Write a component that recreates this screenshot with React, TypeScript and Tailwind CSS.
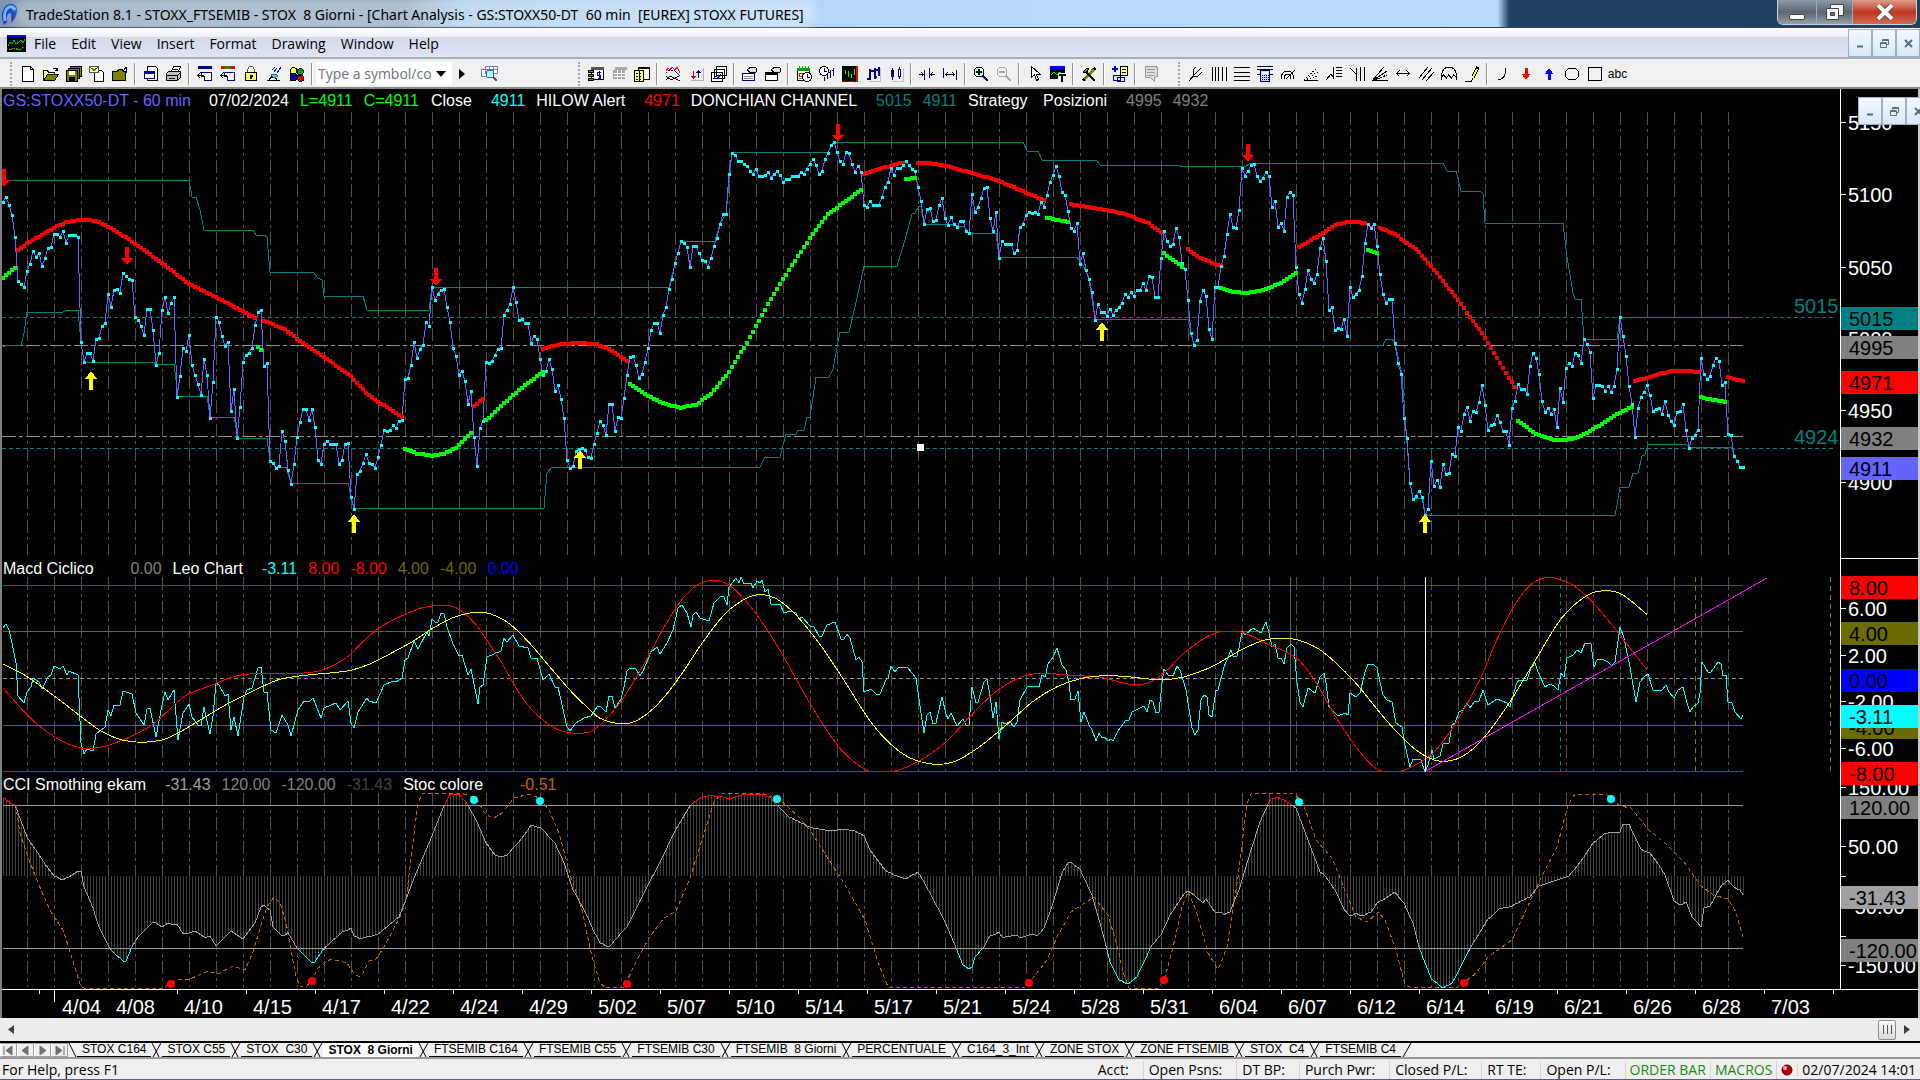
import type { ReactNode } from "react";

type Point = [number, number];

const FIRST_BAR = 3;
const BAR_STEP = 3;

// points are noted as "x,y x,y" on a finer raster, kx units per pixel across and 3 down
function seg(x0: number, kx: number, y0: number, raw: string): Point[] {
  return raw.trim().split(/\s+/).map((p) => {
    const [x, y] = p.split(",").map(Number);
    return [x / kx + x0, y / 3 + y0] as Point;
  });
}

const left = (raw: string) => seg(0, 2.45, 100, raw);
const mid = (raw: string) => seg(560, 2.45, 100, raw);
const right = (raw: string) => seg(1180, 2.119, 100, raw);
const lowLeft = (raw: string) => seg(0, 2.45, 550, raw);
const lowMid = (raw: string) => seg(600, 2.45, 550, raw);
const lowRight = (raw: string) => seg(1220, 2.24, 550, raw);

// one value for every bar between the first and the last point
function toBars(points: Point[]): Point[] {
  const snapped = points.map(([x, y]) => [Math.round((x - FIRST_BAR) / BAR_STEP), y] as Point);
  const out: Point[] = [];
  for (let i = 0; i < snapped.length - 1; i++) {
    const [a, ya] = snapped[i];
    const [b, yb] = snapped[i + 1];
    for (let k = a; k < b; k++) {
      out.push([FIRST_BAR + k * BAR_STEP, ya + ((yb - ya) * (k - a)) / (b - a)]);
    }
  }
  const last = snapped[snapped.length - 1];
  out.push([FIRST_BAR + last[0] * BAR_STEP, last[1]]);
  return out;
}

const line = (points: Point[]) => points.map(([x, y]) => `${Math.round(x)},${Math.round(y)}`).join(" ");

// rounded curve through the points
function smooth(points: Point[]) {
  let d = `M${points[0][0].toFixed(1)} ${points[0][1].toFixed(1)}`;
  for (let i = 0; i < points.length - 1; i++) {
    const p0 = points[Math.max(0, i - 1)];
    const p1 = points[i];
    const p2 = points[i + 1];
    const p3 = points[Math.min(points.length - 1, i + 2)];
    const t = (p2[0] - p1[0]) / 3;
    const s1 = (p2[1] - p0[1]) / (p2[0] - p0[0] || 1);
    const s2 = (p3[1] - p1[1]) / (p3[0] - p1[0] || 1);
    d += `C${(p1[0] + t).toFixed(1)} ${(p1[1] + s1 * t).toFixed(1)} ${(p2[0] - t).toFixed(1)} ${(p2[1] - s2 * t).toFixed(1)} ${p2[0].toFixed(1)} ${p2[1].toFixed(1)}`;
  }
  return d;
}

// a square block on every bar, drawn with a stroke of the same size
const marks = (points: Point[], size: number) =>
  points.map(([x, y]) => `M${x - Math.floor(size / 2)} ${Math.round(y) + (size % 2 ? 0.5 : 0)}h${size}`).join("");

const price = toBars([
  ...left(`8,306 15,291 22,315 30,346 38,411 45,543 52,551 60,561 67,513 74,492 82,454 89,470 96,459 103,498 111,474 118,443 125,441 133,402 140,401 148,412 155,392 163,430 170,405 186,405 192,412 199,726 207,786 214,759 221,759 228,783 236,716 243,714 251,677 258,669 265,581 273,621 280,569 288,567 295,579 302,519 310,527 317,537 324,540 332,651 339,659 346,678 353,706 361,628 368,628 376,689 383,795 390,759 397,630 405,591 412,638 420,608 427,591 435,890 442,828 449,743 457,753 464,705 471,795 479,825 486,852 493,884 501,776 508,825 515,955 523,846 530,651 537,665 545,708 552,739 559,726 567,933 574,866 582,1014 589,921 597,786 604,765 611,760 618,743 626,675 633,635 640,630 648,798 655,790 663,1082 670,1088 677,1104 684,1098 692,992 699,1022 706,1110 714,1152 721,1092 729,1011 736,966 744,927 751,927 758,960 766,927 773,981 780,1080 787,1092 795,1032 802,1023 809,1032 824,1032 832,1092 839,1080 847,1031 853,1028 861,1190 868,1226 876,1122 883,1113 890,1089 898,1061 905,1089 912,1092 920,1104 927,1070 934,1035 942,990 949,992 956,990 964,974 971,984 978,962 986,960 993,836 1000,834 1008,795 1015,726 1023,774 1030,747 1037,735 1045,665 1052,678 1059,561 1067,600 1074,582 1081,570 1089,567 1096,621 1103,665 1111,744 1118,768 1125,825 1133,813 1140,843 1147,911 1155,873 1162,1011 1170,1098 1177,984 1184,963 1192,786 1199,788 1206,783 1214,765 1221,747 1228,744 1236,645 1243,630 1250,612 1258,561 1265,606 1272,660 1280,658 1287,668 1294,668 1302,729 1309,708 1316,716 1324,777 1331,825 1338,812 1346,777 1353,807 1360,873 1368,855 1375,897 1383,954 1390,1080 1397,1104 1405,1098 1412,1052 1427,1044 1434,1050 1441,1071 1449,1074 1456,1032 1463,999 1471,962 1478,974 1485,1005 1493,911 1500,911 1508,993 1515,951 1522,954 1530,894 1537,825 1545,770 1552,768 1559,795 1566,834`),
  ...mid(`202,822 209,786 216,744 223,690 231,668 238,668 246,699 253,645 260,621 268,567 275,537 282,489 290,458 297,422 304,429 312,440 319,500 326,438 334,438 341,459 348,480 356,483 363,500 371,474 378,438 385,414 393,372 400,342 407,342 415,222 422,158 429,165 437,183 444,183 451,191 459,198 466,213 474,222 481,207 488,228 503,225 510,216 517,234 525,222 532,213 540,225 547,245 554,237 561,237 569,228 583,228 591,216 598,222 606,207 613,192 620,177 628,195 635,222 642,213 650,177 657,159 664,135 672,126 680,156 687,183 694,192 701,156 709,158 716,192 723,216 731,198 738,216 745,314 753,321 760,303 767,315 782,314 789,291 796,262 804,246 811,204 819,225 826,204 833,204 841,195 848,183 855,195 863,207 870,213 878,261 885,303 892,372 900,327 907,324 914,363 922,360 929,315 936,294 944,354 951,375 958,351 966,372 973,380 980,363 988,363 995,393 1002,399 1010,282 1017,336 1025,321 1032,294 1039,263 1047,261 1054,354 1061,393 1069,336 1076,474 1083,423 1091,432 1106,432 1113,459 1120,450 1128,381 1135,372 1142,345 1150,336 1157,340 1164,336 1172,341 1179,306 1186,320 1194,284 1201,246 1208,225 1216,198 1223,228 1230,275 1238,285 1245,332 1253,384 1260,393 1267,369 1275,492 1282,459 1289,509 1297,537 1304,576 1311,660 1318,611 1326,636 1334,636 1341,647 1348,627 1356,645 1363,630 1370,621 1378,608 1385,581 1392,591 1399,575 1407,588 1414,570 1421,569 1429,548 1437,570 1444,527 1451,531 1458,591 1466,591 1473,474 1480,393 1488,422 1495,438 1503,432 1510,383 1517,410 1525,490 1532,507 1539,600 1547,699 1554,735 1562,720`),
  ...right(`43,604 50,569 56,587 62,687 68,717 75,561 81,561 88,498 94,468 100,402 107,342 113,380 119,384 126,329 132,203 138,228 145,212 151,194 157,192 164,228 170,243 176,234 183,215 189,228 196,321 202,302 208,380 215,368 221,393 227,291 234,275 240,285 247,500 253,582 259,608 266,567 272,509 278,537 285,549 291,521 298,444 304,413 310,483 317,629 323,621 329,690 336,684 342,686 348,657 355,708 361,561 367,590 374,581 380,570 386,528 393,429 399,372 405,384 412,372 418,438 425,521 431,582 437,609 443,597 450,597 456,729 463,789 469,822 475,954 482,1014 488,1148 494,1196 500,1188 507,1172 513,1190 520,1246 526,1226 532,1083 539,1158 545,1140 551,1161 558,1091 564,1121 570,1119 577,1062 583,1068 590,980 596,993 602,942 609,920 615,963 621,932 628,935 634,905 641,855 647,915 654,990 660,975 666,972 672,944 679,966 685,992 691,993 698,1035 704,924 710,903 717,852 723,866 729,867 736,882 742,797 748,758 755,774 761,822 768,903 774,936 780,924 787,941 793,927 799,980 806,863 812,906 819,804 825,789 831,797 838,758 844,765 850,789 857,717 863,732 869,756 876,894 882,854 889,854 895,858 901,873 907,857 914,876 920,857 926,807 933,650 939,708 946,768 952,857 958,912 965,1012 971,924 978,891 984,875 990,854 997,884 1003,932 1009,927 1016,924 1022,942 1028,903 1035,944 1041,963 1048,975 1054,936 1060,932 1067,911 1073,990 1079,1045 1086,1014 1092,1005 1098,990 1105,773 1111,822 1118,837 1124,828 1130,795 1136,773 1143,782 1149,855 1155,846 1162,1002 1168,1005 1175,1067 1181,1082 1187,1101 1194,1101`),
]);

const donchianHigh = [
  ...left(`8,241 464,241 471,290 479,290 490,330 501,391 619,391 626,404 648,404 655,412 662,517 766,517 780,533 788,540 795,589 890,589 898,629 1052,629 1059,560 1371,560`),
  ...mid(`0,560 268,560 297,422 380,422 393,372 407,342 422,157 657,157 672,125 1135,125 1143,154 1171,154 1180,181 1312,181 1322,196 1518,196`),
  ...right(`0,197 140,197 150,190 557,190 565,214 585,214 596,274 635,274 641,283 647,370 812,370 820,470 832,580 838,596 850,596 857,716 926,716 933,650 1193,650`),
];

const donchianLow = [
  ...left(`8,742 15,734 52,734 60,700 67,637 155,637 163,629 192,629 199,726 207,785 376,785 383,793 427,793 435,889 508,889 515,952 574,952 582,1013 655,1013 662,1082 677,1102 700,1102 714,1150 853,1150 868,1225 1332,1225 1339,1120 1353,1102 1371,1102`),
  ...mid(`0,1102 490,1102 502,1072 540,1072 553,1003 577,1003 584,991 598,991 606,952 613,950 628,832 658,832 668,806 687,697 708,697 722,620 745,499 826,499 845,420 863,342 870,340 880,318 885,320 892,371 950,371 990,380 1002,398 1069,398 1076,472 1267,472 1282,495 1297,537 1311,658 1518,658`),
  ...right(`0,658 18,658 30,734 431,734 437,718 450,716 456,729 470,824 488,1148 494,1195 515,1195 520,1246 921,1246 926,1215 933,1160 951,1160 960,1120 970,1119 978,1068 985,1065 991,1033 1073,1033 1079,1042 1168,1042 1175,1067`),
];

const redTrend = [
  left("45,450 67,430 100,405 133,383 165,367 200,359 235,363 265,380 310,412 340,437 398,489 465,552 530,591 595,634 626,654"),
  left("648,662 695,688 730,716 795,771 861,829 900,878 928,906 960,932 986,951"),
  left("1162,919 1184,896"),
  left("1331,747 1365,734 1415,729 1460,733 1500,752 1539,783"),
  mid("745,222 780,207 841,188"),
  mid("878,188 905,189 945,197 1010,219 1075,243 1135,274 1186,300"),
  mid("1253,312 1320,326 1385,341 1440,370 1473,396"),
  right("18,448 45,475 84,497"),
  right("253,441 300,400 330,375 355,366 392,368"),
  right("424,383 455,403 500,447 545,520 590,600 640,700 685,805 711,860"),
  right("964,843 1000,828 1035,815 1065,812 1100,816"),
  right("1162,831 1194,844"),
];

const greenTrend = [
  left("8,534 38,503"),
  left("633,742 640,750"),
  left("993,1046 1025,1061 1060,1067 1090,1061 1118,1044 1157,1000"),
  left("1192,961 1258,885 1290,848 1328,817"),
  mid("172,852 217,887 250,910 297,923 330,914 370,882 415,816 460,728 510,612 560,509 614,414 660,342 690,310 738,269"),
  mid("848,237 870,234"),
  mid("1194,353 1220,361 1247,366"),
  mid("1480,460 1525,500"),
  right("88,565 115,576 145,579 175,571 215,548 247,518"),
  right("399,450 418,460"),
  right("717,962 755,1002 790,1020 820,1021 850,1008 900,966 940,932 958,922"),
  right("1105,892 1155,906"),
];

const leo = [
  ...lowLeft(`8,233 15,223 22,240 30,280 38,340 45,437 60,460 67,427 75,410 82,383 89,390 96,395 103,417 118,380 125,375 133,347 148,358 155,347 163,375 170,362 192,375 199,580 207,612 214,597 228,603 236,552 258,532 265,480 273,497 280,465 295,465 302,423 324,433 332,488 353,524 361,478 368,475 383,562 397,465 405,427 412,450 427,420 435,570 449,490 464,463 471,500 486,525 493,527 501,470 515,553 523,497 530,400 537,405 552,437 559,432 567,540 574,500 582,558 597,440 604,420 618,415 633,355 640,352 648,425 655,425 663,540 677,550 692,495 706,525 714,557 729,480 744,453 758,455 766,443 787,505 795,473 824,460 832,480 853,453 861,520 868,533 876,485 898,443 905,453 920,458 942,405 964,393 971,397 986,383 993,330 1000,325 1015,272 1023,297 1045,245 1052,258 1059,208 1067,220 1074,215 1081,190 1089,192 1096,230 1111,283 1125,317 1133,315 1147,375 1155,357 1170,462 1177,412 1184,405 1192,320 1228,302 1236,263 1243,275 1258,255 1272,288 1294,293 1302,325 1316,323 1331,390 1346,372 1360,412 1368,412 1390,530 1397,542 1412,520 1430,503 1449,497 1463,470`),
  ...lowMid(`0,468 15,487 22,437 30,437 37,475 52,447 60,410 67,362 74,355 89,357 97,377 105,362 125,305 140,290 148,313 163,280 180,240 192,175 200,166 214,190 222,232 229,195 236,187 244,205 266,213 280,160 297,138 303,140 310,165 317,110 332,85 340,100 346,82 354,103 370,98 376,113 384,92 392,98 397,90 405,127 412,118 420,162 442,163 450,190 465,183 480,190 488,207 495,200 515,228 525,230 537,257 545,258 555,225 575,216 590,267 597,268 605,252 613,265 627,330 634,320 642,335 648,425 663,418 678,436 686,432 700,390 706,383 714,347 722,365 729,353 752,350 765,370 775,383 787,490 795,548 802,495 809,485 817,522 824,520 839,440 847,493 853,508 861,488 875,528 890,508 897,525 904,525 912,410 920,460 927,455 941,395 948,387 955,437 963,505 971,455 978,568 986,515 993,522 1005,517 1015,530 1022,515 1030,450 1045,412 1052,408 1075,410 1082,375 1090,380 1097,343 1110,320 1119,293 1133,345 1141,360 1148,400 1155,450 1163,447 1170,422 1178,515 1185,485 1198,525 1205,540 1214,573 1222,550 1229,565 1237,560 1244,573 1252,567 1258,572 1270,543 1288,510 1295,510 1303,487 1332,468 1340,485 1347,450 1354,455 1362,490 1369,485 1376,400 1383,357 1391,375 1405,377 1413,347 1420,360 1435,420 1450,535 1457,555 1464,540 1472,450 1480,435 1486,442 1493,495 1500,500 1508,420 1515,420 1530,350 1545,300 1552,317`),
  ...lowRight(`37,318 43,295 50,243 57,255 75,235 91,248 104,215 110,250 117,290 124,282 131,325 137,325 144,342 151,295 158,282 165,290 172,400 179,455 185,470 198,413 213,430 225,380 232,370 238,400 245,470 265,497 280,490 286,495 292,430 305,442 313,430 325,365 332,343 345,345 352,355 365,435 373,450 386,455 395,520 407,530 412,570 426,650 433,628 450,630 460,665 467,645 474,600 480,628 493,617 500,583 513,580 520,525 527,520 535,487 545,480 553,460 560,475 568,457 580,453 588,420 600,465 620,447 642,460 650,470 662,405 670,390 688,390 696,355 705,340 713,365 728,410 740,403 748,408 756,420 763,370 770,380 777,325 790,315 800,300 808,310 817,280 830,283 837,352 845,330 855,327 870,337 878,347 885,335 897,230 905,265 912,310 918,350 931,455 940,395 950,380 958,372 970,420 990,420 998,405 1005,425 1017,445 1025,420 1037,412 1045,460 1052,487 1060,470 1070,460 1075,430 1079,335 1092,365 1100,365 1115,335 1122,342 1127,378 1133,375 1139,455 1147,460 1153,487 1167,507 1172,495`),
];

const macdRed = [
  ...lowLeft("8,415 67,495 100,532 133,560 165,581 199,594 240,593 275,582 332,553 380,518 435,455 465,430 515,407 560,385 600,373 700,369 735,370 790,360 850,322 885,280 925,237 970,206 1030,175 1080,166 1105,168 1130,182 1165,222 1195,275 1230,340 1270,425 1300,475 1330,510 1365,538 1400,549 1440,547"),
  ...lowMid("0,525 45,465 85,390 120,315 160,225 200,150 235,108 270,91 300,95 330,118 370,172 410,240 450,320 500,430 550,530 590,598 630,643 660,663 700,666 740,657 800,620 850,573 910,495 960,435 1000,400 1045,376 1090,370 1160,377 1220,380 1260,392 1300,403 1345,398 1390,360 1430,310 1480,265 1517,245"),
  ...lowRight("0,244 50,247 100,278 172,325 213,393 265,513 325,625 360,662 405,663 440,643 480,605 530,515 580,395 620,270 660,165 697,103 725,84 750,84 790,105 830,150 875,220 920,297 957,360"),
];

const macdYellow = [
  ...lowLeft("8,343 60,375 133,438 199,500 250,545 300,570 350,577 400,569 435,550 500,503 560,460 620,423 680,390 740,377 850,363 900,345 950,315 1010,275 1060,235 1110,203 1160,187 1200,191 1250,223 1300,283 1350,355 1400,425 1450,485"),
  ...lowMid("0,505 40,520 80,517 120,487 160,437 200,372 250,280 300,200 340,158 385,134 430,145 480,195 540,285 600,395 660,510 710,580 760,624 820,643 870,634 930,590 1000,520 1060,455 1120,410 1180,385 1240,377 1300,381 1370,389 1430,381 1490,355"),
  ...lowRight("0,337 50,298 100,270 140,265 180,272 230,305 300,393 370,507 430,590 480,630 530,627 580,580 640,475 700,345 765,205 820,138 860,122 900,133 957,194"),
];

const cci = toBars([
  ...lowLeft("8,742 25,755 38,766 45,790 67,862 90,900 115,955 133,977 155,990 175,975 192,962 200,962 207,1010 225,1075 245,1130 265,1185 275,1200 300,1233 310,1232 325,1192 340,1160 360,1135 378,1115 398,1130 412,1120 435,1122 450,1152 475,1143 500,1162 515,1158 530,1187 565,1143 597,1167 625,1118 640,1072 648,1065 660,1080 672,1130 690,1158 706,1150 730,1195 765,1238 773,1235 795,1195 835,1147 860,1135 868,1158 885,1166 925,1152 942,1137 975,1100 993,1055 1015,985 1050,880 1080,790 1090,767 1105,732 1125,732 1150,765 1170,815 1190,880 1215,915 1230,922 1245,915 1280,865 1302,826 1325,832 1360,878 1385,940 1405,1020 1430,1085 1455,1145"),
  ...lowMid("0,1178 24,1191 67,1130 95,1058 120,1005 148,937 185,842 222,767 250,740 270,736 297,738 318,745 350,733 400,733 420,745 437,765 465,800 515,832 550,840 575,842 590,837 620,839 648,858 665,900 700,960 720,975 750,987 780,965 790,980 810,1030 845,1115 873,1200 890,1245 905,1257 912,1250 920,1222 940,1190 955,1158 978,1147 986,1162 1020,1155 1030,1165 1055,1153 1075,1155 1090,1135 1110,1060 1130,970 1145,938 1155,937 1175,957 1205,1035 1225,1130 1250,1235 1275,1290 1290,1303 1315,1280 1355,1185 1375,1155 1395,1095 1430,1028 1440,1022 1475,1058 1488,1047 1508,1087"),
  ...lowRight("0,1087 12,1094 25,1085 45,1020 60,930 90,815 110,757 117,743 128,742 150,755 170,775 195,870 225,965 240,980 255,1020 275,1078 292,1098 305,1090 318,1098 340,1085 355,1060 393,1027 410,1060 430,1120 445,1190 470,1285 500,1314 520,1300 545,1230 565,1180 600,1108 630,1075 655,1068 695,1040 715,1007 780,978 800,945 818,920 835,880 865,850 878,845 896,847 905,823 915,823 930,860 940,898 960,910 985,945 1000,975 1020,1052 1032,1066 1045,1055 1060,1100 1078,1130 1086,1075 1100,1067 1125,1005 1138,990 1150,1012 1162,1020 1172,1035"),
]);

const stoc = [
  ...lowLeft("8,742 38,770 50,850 70,930 100,1020 125,1085 155,1140 175,1215 199,1310 207,1315 400,1315 420,1300 440,1287 465,1288 510,1263 535,1273 570,1248 600,1260 620,1205 640,1125 655,1070 672,1040 685,1060 700,1115 725,1280 735,1308 750,1312 765,1290 780,1255 810,1228 850,1238 865,1265 880,1280 890,1270 905,1232 922,1228 940,1190 980,1100 995,1050 1010,900 1025,760 1035,732 1060,730 1130,730 1165,745 1190,795 1210,805 1230,790 1260,745 1295,732 1320,745 1345,780 1370,850 1400,980 1425,1080 1450,1220"),
  ...lowMid("0,1300 15,1315 60,1310 90,1230 120,1165 155,1108 187,1083 220,985 250,870 280,755 300,730 395,730 440,750 490,805 520,850 560,930 600,1005 650,1110 680,1235 705,1312 1040,1315 1060,1285 1095,1230 1120,1160 1155,1085 1210,1042 1245,1095 1265,1175 1285,1275 1297,1315 1370,1315 1385,1280 1405,1190 1425,1070 1440,1025 1460,1080 1490,1210 1513,1257"),
  ...lowRight("0,1245 15,1190 40,980 60,760 70,732 165,730 185,760 215,870 250,925 290,1050 305,1100 330,1115 355,1087 370,1110 395,1200 415,1305 430,1315 535,1312 575,1265 600,1220 655,1170 700,1035 725,965 755,890 780,765 795,732 865,731 895,767 920,775 960,840 1000,882 1040,935 1075,1005 1105,1035 1137,1047 1155,1085 1172,1160"),
];

const gridXs = Array.from({ length: 64 }, (_, i) => 27 * (i + 1));

function Grid({ top, bottom }: { top: number; bottom: number }) {
  return (
    <path
      d={gridXs.map((x) => `M${x + 0.5} ${top}V${bottom}`).join("")}
      stroke="#505050"
      strokeDasharray="13 4 3 4"
    />
  );
}

function PricePane() {
  return (
    <svg viewBox="2 109 1838 446" preserveAspectRatio="none" className="block h-[446px] w-full" fill="none" shapeRendering="crispEdges" role="img" aria-label="Close price with Donchian channel">
      <Grid top={112} bottom={555} />
      <path d="M2 317.5H1836M2 448.5H1836" stroke="#008080" strokeDasharray="4 3" />
      <path d="M2 345.5H1743M2 436.5H1743" stroke="#909090" strokeDasharray="14 3 4 3" />
      <polyline points={line(donchianHigh)} stroke="#008080" />
      <polyline points={line(donchianLow)} stroke="#008080" />
      <polyline points={line(price)} stroke="#6464ff" />
      <path d={redTrend.map((s) => marks(toBars(s), 4)).join("")} stroke="#ff0000" strokeWidth="4" />
      <path d={greenTrend.map((s) => marks(toBars(s), 4)).join("")} stroke="#00ff00" strokeWidth="4" />
      <path d={marks(price, 3)} stroke="#00ffff" strokeWidth="3" />
      {[[4, 187], [127, 265], [436, 286], [838, 142], [1248, 162]].map(([x, y]) => (
        <path key={x} d={`M${x} ${y}l-6 -7h4v-11h4v11h4z`} fill="#ff0000" />
      ))}
      {[[91, 371], [354, 514], [580, 450], [1102, 322], [1425, 514]].map(([x, y]) => (
        <path key={x} d={`M${x} ${y}l-6 8h4v11h4v-11h4z`} fill="#ffff00" />
      ))}
      <path d="M917 444h7v7h-7z" fill="#ffffff" />
      <g fontFamily="Liberation Sans, sans-serif" fontSize="20" fill="#008080">
        <text x="1794" y="313">5015</text>
        <text x="1794" y="444">4924</text>
      </g>
    </svg>
  );
}

function MacdPane() {
  return (
    <svg viewBox="2 577 1838 195" preserveAspectRatio="none" className="block h-[195px] w-full" fill="none" shapeRendering="crispEdges" role="img" aria-label="Macd Ciclico and Leo Chart">
      <Grid top={577} bottom={772} />
      <path d="M3 631.5H1743M3 725.5H1743" stroke="#6b6b00" />
      <path d="M3 585.5H1743M3 771.5H1743" stroke="#ff0000" />
      <path d="M3 678.5H1743" stroke="#909090" strokeDasharray="4 3" />
      <path d="M1290.5 577V772" stroke="#606060" />
      <path d="M1560.5 577V772" stroke="#008080" strokeDasharray="4 4" />
      <path d="M1695.5 577V772M1830.5 577V772" stroke="#808000" strokeDasharray="5 4" />
      <polyline points={line(leo)} stroke="#00ffff" />
      <path d={smooth(macdRed)} stroke="#ff0000" />
      <path d={smooth(macdYellow)} stroke="#ffff00" />
      <path d="M1426 771L1767 578" stroke="#ff00ff" />
      <path d="M1425.5 577V772" stroke="#ffffff" />
    </svg>
  );
}

function CciPane() {
  const zero = 876;
  return (
    <svg viewBox="2 793 1838 197" preserveAspectRatio="none" className="block h-[197px] w-full" fill="none" shapeRendering="crispEdges" role="img" aria-label="CCI Smothing ekam and Stoc colore">
      <defs>
        <clipPath id="over"><rect x="0" y="780" width="1840" height="25" /></clipPath>
        <clipPath id="under"><rect x="0" y="949" width="1840" height="50" /></clipPath>
      </defs>
      <Grid top={793} bottom={987} />
      <path d={cci.map(([x, y]) => `M${x + 0.5} ${zero}V${Math.round(y)}`).join("")} stroke="#404040" />
      <path d="M3 805.5H1743M3 948.5H1743" stroke="#9a9a9a" />
      <polyline points={line(stoc)} stroke="#c86400" strokeDasharray="4 3" />
      <polyline points={line(cci)} stroke="#a0a0a0" />
      <polyline points={line(cci)} stroke="#ff0000" clipPath="url(#over)" />
      <polyline points={line(cci)} stroke="#00ffff" clipPath="url(#under)" />
      <g fill="#00ffff" shapeRendering="auto">
        {[[474, 800], [540, 801], [777, 799], [1299, 802], [1611, 799]].map(([x, y]) => <circle key={x} cx={x} cy={y} r="4" />)}
      </g>
      <g fill="#ff0000" shapeRendering="auto">
        {[[171, 984], [312, 981], [627, 984], [1029, 983], [1164, 980], [1464, 983]].map(([x, y]) => <circle key={x} cx={x} cy={y} r="4" />)}
      </g>
      <path d="M2 989.5H1840" stroke="#ffffff" strokeWidth="1" />
    </svg>
  );
}

const axisTicks: [number, string][] = [
  [122, "5150"], [194, "5100"], [267, "5050"], [338, "5000"], [410, "4950"], [482, "4900"],
  [608, "6.00"], [655, "2.00"], [701, "-2.00"], [748, "-6.00"], [774, ""],
  [787, "150.00"], [846, "50.00"], [876, ""], [906, "-50.00"], [936, ""], [965, "-150.00"],
];

const axisTags: [number, string, string][] = [
  [307, "5015", "#008080"], [336, "4995", "#808080"], [371, "4971", "#ff0000"], [427, "4932", "#808080"], [457, "4911", "#6464ff"],
  [576, "8.00", "#ff0000"], [622, "4.00", "#6b6b00"], [669, "0.00", "#0000ff"], [716, "-4.00", "#6b6b00"], [705, "-3.11", "#00ffff"], [762, "-8.00", "#ff0000"],
  [796, "120.00", "#808080"], [886, "-31.43", "#a0a0a0"], [939, "-120.00", "#808080"],
];

function ValueAxis() {
  return (
    <svg viewBox="1840 89 78 929" className="block h-[929px] w-[78px] shrink-0" shapeRendering="crispEdges" fontFamily="Liberation Sans, sans-serif" fontSize="20">
      <path d="M1840.5 89V990M1840 558.5H1918M1840 989.5H1918" stroke="#ffffff" fill="none" />
      {axisTicks.map(([y, label]) => (
        <g key={y} fill="#ffffff">
          <rect x="1841" y={y} width="5" height="1" />
          <text x="1848" y={y + 8}>{label}</text>
        </g>
      ))}
      {axisTags.map(([y, label, color]) => (
        <g key={label}>
          <rect x="1841" y={y} width="77" height="23" fill={color} />
          <text x="1849" y={y + 19} fill="#000000">{label}</text>
        </g>
      ))}
    </svg>
  );
}

const dates = ["4/10", "4/15", "4/17", "4/22", "4/24", "4/29", "5/02", "5/07", "5/10", "5/14", "5/17", "5/21", "5/24", "5/28", "5/31", "6/04", "6/07", "6/12", "6/14", "6/19", "6/21", "6/26", "6/28", "7/03"];

function TimeAxis() {
  return (
    <div className="flex h-7 text-[20px] leading-[34px] text-white">
      <span className="h-1 w-[38px] border-r border-white" />
      <span className="h-3 w-[15px] border-r border-white" />
      <span className="w-[54px] pl-[7px]">4/04</span>
      <span className="w-[68px] pl-[7px]">4/08</span>
      {dates.map((d) => (
        <span key={d} className="relative flex-1 pl-[7px] before:absolute before:left-0 before:top-0 before:h-1 before:w-px before:bg-white">{d}</span>
      ))}
      <span className="h-1 w-[7px] border-l border-white" />
    </div>
  );
}

type Study = { name: string; values: [string, string][] };

function StudyRow({ studies, className }: { studies: Study[]; className: string }) {
  return (
    <div className={`flex items-center gap-[11px] pl-px text-[16px] whitespace-pre ${className}`}>
      {studies.map((s) => (
        <div key={s.name} className="flex gap-[11px]">
          <span className={s.values.length ? "mr-2 text-white" : "text-white"}>{s.name}</span>
          {s.values.map(([v, color]) => <span key={v} className={color}>{v}</span>)}
        </div>
      ))}
    </div>
  );
}

function Ico({ children, w = 16 }: { children: ReactNode; w?: number }) {
  return <svg width={w} height="16" viewBox={`0 0 ${w} 16`} fill="none" stroke="#000" shapeRendering="crispEdges">{children}</svg>;
}

const calendar = (
  <>
    <path d="M1.500 2.500h12v12h-12z" fill="#fff" />
    <path d="M1 2h13v3h-13z" fill="#00a000" stroke="none" />
    <path d="M3.500 0v3M6.500 0v3M9.500 0v3M12.500 0v3" stroke="#00c000" />
    <path d="M3 7h3v3h-3z" stroke="#f00" />
    <path d="M3 12h4" stroke="#888" />
    <circle cx="11" cy="11" r="4.500" fill="#fff" />
    <path d="M11.500 8v3.500h2" />
  </>
);

const fileIcons: [string, ReactNode][] = [
  ["New", <Ico><path d="M2.500 .5h8l3 3v12h-11zM10.500 .5v3h3" fill="#fff" /></Ico>],
  ["Open", <Ico><path d="M.5 14.500v-10h4l1 2h6v2" fill="#ffff80" /><path d="M.5 14.500l4-6h11l-4 6z" fill="#808000" /><path d="M9.500 3.500q3-3 5 1M14.500 1.500v3h-3" /></Ico>],
  ["Save all", <Ico><path d="M4.500 .5h11v10h-11z" fill="#808000" /><path d="M2.500 2.500h11v10h-11z" fill="#808000" /><path d="M.5 4.500h11v11h-11z" fill="#808000" /><path d="M3 5h6v4h-6z" fill="#fff" stroke="none" /><path d="M3 11h6v4h-6z" fill="#000" stroke="none" /></Ico>],
  ["Send", <Ico><path d="M5.500 4.500h7l2 2v9h-9z" fill="#fff" /><path d="M.5 .5h9v6h-9z" fill="#ffff80" stroke="#555" /><path d="M.5 .5l4.500 4 4.500-4" stroke="#555" /></Ico>],
  ["Close", <Ico><path d="M.5 14.500v-9h5l1-2h4l1 2h2v9z" fill="#808000" /><path d="M14.500 7v-6M12 3.500l2.500-2.500" stroke="#000080" /></Ico>],
];

const printIcons: [string, ReactNode][] = [
  ["Print preview", <Ico><path d="M4.500 .5h8l2 2v12h-10z" fill="#fff" /><path d="M1.500 5.500h10v7h-10z" fill="#fff" stroke="#000080" /><path d="M1 5h11v3h-11z" fill="#0000a0" stroke="none" /></Ico>],
  ["Print", <Ico><path d="M5.500 5.500l2-5h7l-2 5" fill="#fff" /><path d="M.5 7.500l2-2h12v6l-3 3h-11z" fill="#c0c0c0" /><path d="M.5 9.500h11v5M11.500 9.500l3-3M7 3.500h5M3 12.500h6" /></Ico>],
];

const dataIcons: [string, ReactNode][] = [
  ["Insert symbol", <Ico><path d="M1 1.500h14" stroke="#000080" strokeWidth="3" /><path d="M4.500 6.500h10v8h-7v-4h-3z" fill="#fff" stroke="#000080" /><path d="M.5 9.500h6M3.500 6.500l-3 3 3 3" /></Ico>],
  ["Insert strategy", <Ico><path d="M1 1.500h4" stroke="#f00" strokeWidth="3" /><path d="M5 1.500h5" stroke="#00a000" strokeWidth="3" /><path d="M10 1.500h5" stroke="#f00" strokeWidth="3" /><path d="M4.500 6.500h10v8h-7v-4h-3z" fill="#fff" stroke="#000080" /><path d="M.5 9.500h6M3.500 6.500l-3 3 3 3" /></Ico>],
  ["Lock", <Ico><path d="M4.500 7.500v-4l2-3h3l2 3v4" stroke="#555" /><path d="M2.500 6.500h11v8h-11z" fill="#ffff60" /><path d="M6.500 9.500h3M8 9v4" strokeWidth="2" /></Ico>],
  ["Data link", <Ico><path d="M1 14.500h13M3 14l4-6 4 6M5 11h5" /><path d="M5 9l5-1 2 2-4 2z" fill="#80c0ff" stroke="#008080" /><path d="M8 6l3-4M11 7l4-6M6 4l3-3" stroke="#0000c0" /></Ico>],
  ["EasyLanguage", <Ico><path d="M1 4l3-3 4 2-1 4-5 1z" fill="#ffff00" /><path d="M8 4l4-2 3 3-2 4-4-1z" fill="#00a000" /><path d="M1 8l5-1 2 3-1 4-5 1z" fill="#0000c0" /><path d="M9 9l5 1 1 4-4 2-3-3z" fill="#e00000" /></Ico>],
];

const viewIcons: [string, ReactNode][][] = [
  [
    ["Time and sales", <Ico><path d="M3.500 1.500h12v12h-12z" fill="#fff" /><path d="M3 1h13v3h-13z" fill="#555" stroke="none" /><path d="M.5 4.500h5v2h-5zM.5 8.500h5v2h-5zM.5 12.500h5v2h-5z" fill="#808000" /><path d="M12.500 6h-3v3h3v3h-3M11 5v8" stroke="#0000c0" /></Ico>],
    ["Quote list", <Ico><path d="M4 1h12v3h-12zM2 4h12v9h-12z" fill="#a8a8a8" stroke="none" /><path d="M3 7h11M3 10h11M6 4v10M10 4v10" stroke="#fff" /></Ico>],
    ["Data window", <Ico><path d="M4.500 1.500h11v12h-11z" fill="#fff" /><path d="M4 1.500h12" strokeWidth="2" /><path d="M.5 4.500h9v11h-9z" fill="#ffff80" /><path d="M2 7.500h6M2 10.500h6M2 13.500h6M5.500 5v10" strokeDasharray="2 1" /></Ico>],
  ],
  [
    ["Indicator", <Ico><path d="M1 5l2-3 2 2 2-3 3 3 2-3 2 4 1 2" stroke="#f00" /><path d="M1 7l4-3 5 1 5 5" stroke="#0000c0" strokeDasharray="2 1" /><path d="M1 14l4-4 4 2 6 3M1 10l5 4 8-4" /></Ico>],
    ["Buy and sell arrows", <Ico><path d="M15.500 2v12.500h-13" stroke="#b0b0b0" /><path d="M5.500 5v7M3.500 10l2 2 2-2" stroke="#c00000" /><path d="M10.500 12v-7M8.500 7l2-2 2 2" stroke="#000080" /></Ico>],
    ["Chart windows", <Ico><path d="M5.500 .5h10v9h-10zM3.500 3.500h10v9h-10zM.5 6.500h11v9h-11z" fill="#fff" /><path d="M2 13l3-3 2 2 3-4" stroke="#0000c0" /></Ico>],
  ],
  [
    ["Format window", <Ico><path d="M.5 7.500h12v7h-12z" fill="#fff" stroke="#000080" /><path d="M5 4l4-3 5 1v4l-5 1z" fill="#ddd" /><path d="M2 10.500h9M2 12.500h9" stroke="#888" /></Ico>],
    ["Format symbol", <Ico><path d="M.5 6.500h12v8h-12z" fill="#fff" /><path d="M0 7.500h13" strokeWidth="3" /><path d="M6 4l4-3 5 1v4l-5 1z" fill="#ddd" /></Ico>],
  ],
  [
    ["Sessions", <Ico>{calendar}</Ico>],
    ["Interval", <Ico><circle cx="5" cy="5" r="4.500" fill="#fff" /><path d="M5 2v3h3" /><path d="M5 15v-4M8 13v-4M11 12v-8M14 10v-8M9.500 6h2M12.500 4h2" stroke="#000080" /></Ico>],
    ["Bars", <Ico><path d="M0 0h16v16h-16z" fill="#000" stroke="none" /><path d="M15 0v16" stroke="#f00" strokeWidth="2" /><path d="M0 15.500h13" stroke="#a00" /><path d="M3.500 4v4M6.500 5v6M9.500 8v4M12.500 3v6" stroke="#00ff00" /></Ico>],
    ["OHLC bars", <Ico><path d="M15.500 2v13.500h-12" stroke="#c0c0c0" /><path d="M4.500 3v11M2 12.500h2M9.500 2v11M5 4.500h4M10 10.500h2M13.500 1v9M11 3.500h3" stroke="#000080" strokeWidth="2" /></Ico>],
    ["Candlesticks", <Ico><path d="M15.500 2v13.500h-12" stroke="#c0c0c0" /><path d="M4.500 2v12M11.500 1v12" stroke="#000080" /><path d="M3 4h3v7h-3z" fill="#000080" stroke="none" /><path d="M10.500 3.500h2v7h-2z" fill="#fff" stroke="#000080" /></Ico>],
  ],
  [
    ["Decrease bar spacing", <Ico><path d="M5.500 4v10M10.500 2v10" stroke="#000080" /><path d="M0 8.500h4M2.500 6.500l2 2-2 2M16 8.500h-4M13.500 6.500l-2 2 2 2" /></Ico>],
    ["Increase bar spacing", <Ico><path d="M1.500 2v10M14.500 4v10" stroke="#000080" /><path d="M3 8.500h10M5.500 6.500l-2 2 2 2M10.500 6.500l2 2-2 2" /></Ico>],
  ],
  [
    ["Zoom in", <Ico><circle cx="6" cy="6" r="5" fill="#d8ffff" /><path d="M3 6h6M6 3v6" strokeWidth="2" /><path d="M10 10l5 5" stroke="#000080" strokeWidth="2" /></Ico>],
    ["Zoom out", <Ico><circle cx="6" cy="6" r="5" stroke="#a8a8a8" /><path d="M3 6h6" stroke="#a8a8a8" strokeWidth="2" /><path d="M10 10l5 5" stroke="#a8a8a8" strokeWidth="2" /></Ico>],
  ],
  [
    ["Pointer", <Ico><path d="M4.500 .5v11l3-3 2 6 2-1-2-5h4z" fill="#fff" /></Ico>],
    ["Text tool", <Ico><path d="M0 1h15v12h-15z" fill="#000" stroke="none" /><path d="M0 1.500h15" stroke="#00f" strokeWidth="3" /><path d="M1 9l3-3 3 3 4-3" stroke="#0f0" /><path d="M8 7h8v9h-8z" fill="#efefef" stroke="none" /><path d="M8.500 8.500h7M12 8v8" strokeWidth="2" /></Ico>],
  ],
  [["Customize", <Ico><path d="M3 14l10-11" stroke="#808000" strokeWidth="3" /><path d="M2 6l4-4 2 1-3 4z" fill="#808000" /><path d="M6 7l8 8M13 2l2 2M2 13l2 2" strokeWidth="2" /></Ico>]],
  [["Add window", <Ico><path d="M0 3h6M3 0v6" stroke="#0000e0" strokeWidth="2" /><path d="M8.500 .5h7v9h-7z" fill="#ffff80" /><path d="M10 3.500h4M10 6.500h4" /><path d="M1.500 9.500h7v5h-7zM5.500 11.500h7v4h-7z" fill="#d8e4f8" stroke="#000080" /></Ico>]],
  [["Notes", <Ico><path d="M2.500 .5h11l1 2v8l-3 1v4l-4-4h-5z" fill="#ddd" stroke="#999" /><path d="M4 3.500h8M4 6.500h8M4 9.500h8" stroke="#999" /></Ico>]],
];

const drawIcons: [string, ReactNode][] = [
  ["Pitchfork", <Ico><path d="M1 15l6-7M7 8l6-6M5 4v6h5M5 4l3-3M10 10l4-4" /></Ico>],
  ["Vertical lines", <Ico><path d="M1.500 1v14M4.500 1v14M7.500 1v14M11.500 1v14M15.500 1v14" /></Ico>],
  ["Horizontal lines", <Ico><path d="M0 1.500h16M0 6.500h16M0 10.500h16M0 14.500h16" /></Ico>],
  ["Calculator", <Ico><path d="M0 .5h16M0 3.500h16M0 8.500h16" /><path d="M3.500 4.500h9v11h-9z" fill="#c0d8ff" stroke="#000080" /><path d="M5 6.500h6" stroke="#fff" strokeWidth="2" /><path d="M5 9.500h7M5 11.500h7M5 13.500h7" stroke="#000080" strokeDasharray="1 1" /></Ico>],
  ["Fibonacci arcs", <Ico><path d="M1 13q0-8 7-8 5 0 6 8M4 13q0-5 4-5 3 0 3 5M6 13l9-9" /></Ico>],
  ["Fibonacci fan", <Ico><path d="M1 14.500h14" /><path d="M1 14l13-12M1 14l14-8M1 14l14-4" strokeDasharray="1 2" /></Ico>],
  ["Price extension", <Ico><path d="M0 14l5-6 2 3v-10M10 1.500h6M10 4.500h6M10 7.500h6M10 10.500h6" /></Ico>],
  ["Time extension", <Ico><path d="M1 2l6 6v7M7.500 8v-6M11.500 1v14M15.500 1v14" /></Ico>],
  ["Gann fan", <Ico><path d="M0 15l12-14M0 15l15-10M0 14.500h16" /><path d="M0 15l15-6" strokeDasharray="2 1" /></Ico>],
  ["Width", <Ico><path d="M1 7.500h14M4.500 4.500l-3 3 3 3M11.500 4.500l3 3-3 3" /></Ico>],
  ["Parallel lines", <Ico><path d="M1 12l9-11M4 14l10-12M8 15l8-9" /></Ico>],
  ["Cycles", <Ico><path d="M.5 14v-6q2-7 7.500-7t7.500 7v6M.5 11l2-2 3 3 2-3 3 3 2-3 3 2" /></Ico>],
  ["Pencil", <Ico><path d="M1 15.500h6l2-3" /><path d="M9 11l5-10" strokeWidth="4" /><path d="M9 11l4-8" stroke="#ffff00" strokeWidth="2" /></Ico>],
];

const shapeIcons: [string, ReactNode][] = [
  ["Arc", <Ico><path d="M3 14q8-1 8-12" /></Ico>],
  ["Down arrow", <Ico><path d="M6.500 2h3v6h3l-4.500 6-4.500-6h3z" fill="#f00" stroke="none" /></Ico>],
  ["Up arrow", <Ico><path d="M6.500 14h3v-6h3l-4.500-6-4.500 6h3z" fill="#00f" stroke="none" /></Ico>],
  ["Ellipse", <Ico><ellipse cx="8" cy="8" rx="7" ry="6" /></Ico>],
  ["Rectangle", <Ico><path d="M1.500 1.500h13v13h-13z" /></Ico>],
  ["Text", <span className="text-[12px]">abc</span>],
];

function Tools({ items }: { items: [string, ReactNode][] }) {
  return (
    <>
      {items.map(([label, icon]) => (
        <button key={label} type="button" aria-label={label} className="flex h-6 w-[23px] shrink-0 items-center justify-center">{icon}</button>
      ))}
    </>
  );
}

const Sep = () => <span className="mx-[3px] h-[22px] w-[2px] shrink-0 border-l border-[#909090] bg-white" />;
const Grip = () => <span className="mr-1 h-6 w-px shrink-0 border-l-2 border-dotted border-[#a8a8a8]" />;

function Toolbar() {
  return (
    <div className="flex h-[30px] items-center border-b-2 border-[#8a8a8a] bg-[#f0f0f0] pt-px">
      <div className="flex w-[578px] shrink-0 items-center pl-[10px]">
        <Grip />
        <Tools items={fileIcons} />
        <Sep />
        <Tools items={printIcons} />
        <Sep />
        <Tools items={dataIcons} />
        <Sep />
        <div className="flex h-[23px] w-[136px] items-center bg-white">
          <input aria-label="Symbol" placeholder="Type a symbol/co" className="w-[120px] pl-[2px] font-['Open_Sans',sans-serif] text-[14px] text-gray-600 outline-none placeholder:text-gray-500" />
          <button type="button" aria-label="Recent symbols"><svg width="10" height="6"><path d="M0 0h10l-5 6z" /></svg></button>
        </div>
        <button type="button" aria-label="Go" className="flex w-5 justify-center"><svg width="6" height="10"><path d="M0 0v10l6-5z" /></svg></button>
        <button type="button" aria-label="Symbol lookup" className="ml-2">
          <Ico w={18}><path d="M5.500 .5h12v7h-12zM1.500 3.500h9v7h-9z" fill="#fff" stroke="#7080a0" /><path d="M5 3.500h12M9 0v7M13 0v7" stroke="#7080a0" /><circle cx="10" cy="8" r="4" fill="#a0ffff" stroke="#555" /><path d="M13 11l4 4" stroke="#555" strokeWidth="2" /></Ico>
        </button>
      </div>
      <div className="flex w-[600px] shrink-0 items-center">
        <Grip />
        {viewIcons.map((group, i) => (
          <div key={i} className="flex items-center">
            {i > 0 && <Sep />}
            <Tools items={group} />
          </div>
        ))}
      </div>
      <div className="flex items-center">
        <Grip />
        <Tools items={drawIcons} />
        <Sep />
        <Tools items={shapeIcons} />
      </div>
    </div>
  );
}

function MdiButtons({ className }: { className: string }) {
  const style = "flex flex-1 items-center justify-center border border-[#9cb0c8] bg-gradient-to-b from-[#f4f9fe] to-[#d9e7f6]";
  return (
    <div className={`flex h-7 ${className}`}>
      <button type="button" aria-label="Minimize window" className={style}><svg width="8" height="10"><path d="M1 8.500h6" stroke="#5d6b7e" strokeWidth="2" /></svg></button>
      <button type="button" aria-label="Restore window" className={style}><svg width="9" height="9" fill="none" stroke="#5d6b7e"><path d="M2.500 2.500v-2h6v5h-2M2.500 1.500h6M.5 3.500h6v5h-6zM.5 4.500h6" /></svg></button>
      <button type="button" aria-label="Close window" className={style}><svg width="9" height="9" stroke="#5d6b7e" strokeWidth="2"><path d="M1 1l7 7M8 1l-7 7" /></svg></button>
    </div>
  );
}

function TitleBar() {
  return (
    <header className="relative flex h-7 items-center border-b border-[#30405a] bg-[linear-gradient(90deg,#7f95ad_0%,#8ea4ba_10%,#8fa3b8_21%,#a9cbea_24%,#b5d8fa_45%,#b7dbfd_78%,#1f4163_78.600%,#1e3f60_100%)]">
      <div className="mr-auto flex items-center">
        <svg width="18" height="25" viewBox="0 0 18 25" className="ml-px">
          <path d="M3 24Q-1 15 2 9 5 2 11 3q6 1 5 8-1 7-6 11 1-5 0-9-1-2-3 0-2 3-1 8z" fill="#0f3fd0" />
          <path d="M4 20Q2 9 8 6q4-1 6 3" fill="none" stroke="#6fb4ff" strokeWidth="3" />
          <path d="M11 12q-1 5 0 8 4-5 4-10z" fill="#0a2a9a" />
        </svg>
        <h1 className="rounded-full bg-white/30 px-[7px] pt-px font-['Noto_Sans',sans-serif] text-[14px] whitespace-pre text-black shadow-[0_0_12px_6px_rgba(255,255,255,0.3)]">
          TradeStation 8.1 - STOXX_FTSEMIB - STOX  8 Giorni - [Chart Analysis - GS:STOXX50-DT  60 min  [EUREX] STOXX FUTURES]
        </h1>
      </div>
      <div className="mr-[3px] flex h-[25px] self-start overflow-hidden rounded-b-md border border-t-0 border-[#c8d2dc]">
        <button type="button" aria-label="Minimize" className="flex w-[39px] items-end justify-center border-r border-[#a0a8b0] bg-gradient-to-b from-[#8f9aa8] via-[#5d6671] to-[#93a0ad] pb-1"><span className="h-[6px] w-4 rounded-xs border border-[#444] bg-white" /></button>
        <button type="button" aria-label="Restore" className="flex w-9 items-center justify-center border-r border-[#a0a8b0] bg-gradient-to-b from-[#8f9aa8] via-[#5d6671] to-[#93a0ad]">
          <svg width="20" height="18" fill="#f4f4f4" stroke="#444"><path d="M5.500 1.500h13v11h-13z" /><path d="M1.500 5.500h12v11h-12z" /><path d="M5.500 9.500h4v3h-4z" fill="#667" /></svg>
        </button>
        <button type="button" aria-label="Close" className="flex w-[63px] items-center justify-center bg-gradient-to-b from-[#dc9a86] via-[#bf3420] to-[#d06a50]">
          <svg width="18" height="16" stroke="#fff" strokeWidth="4"><path d="M2 1l14 14M16 1l-14 14" stroke="#553" strokeWidth="6" /><path d="M2 1l14 14M16 1l-14 14" /></svg>
        </button>
      </div>
    </header>
  );
}

const menus = ["File", "Edit", "View", "Insert", "Format", "Drawing", "Window", "Help"];

function MenuBar() {
  return (
    <nav className="flex h-[31px] items-center border-b-2 border-[#a9adb8] bg-[linear-gradient(#fdfdff_0%,#eef0f8_30%,#d5daeb_31%,#dfe4f4_100%)] pt-px pl-[7px]">
      <svg width="19" height="17" shapeRendering="crispEdges"><path d="M0 0h19v17h-19z" /><path d="M0 1h19" stroke="#00f" strokeWidth="2" /><path d="M1 11l2-4 2 2 2-4 2 4 3-2 2-2 2 3 2-4M2 15l5-2 5 2 5-3" stroke="#00c000" fill="none" /><path d="M15 9v8M0 13h15" stroke="#a00000" strokeDasharray="1 1" /></svg>
      <div className="mr-auto flex gap-[15px] pl-2 font-['Open_Sans',sans-serif] text-[14px]">
        {menus.map((m) => <button key={m} type="button">{m}</button>)}
      </div>
      <MdiButtons className="w-[72px]" />
    </nav>
  );
}

const sheets = ["STOX C164", "STOX C55", "STOX  C30", "STOX  8 Giorni", "FTSEMIB C164", "FTSEMIB C55", "FTSEMIB C30", "FTSEMIB  8 Giorni", "PERCENTUALE", "C164_3_Int", "ZONE STOX", "ZONE FTSEMIB", "STOX  C4", "FTSEMIB C4"];

const navGlyphs = ["M1 1v9M9 1v9l-6-4.500z", "M8 1v9l-6-4.500z", "M3 1v9l6-4.500z", "M10 1v9M2 1v9l6-4.500z"];
const navNames = ["First sheet", "Previous sheet", "Next sheet", "Last sheet"];

function SheetTabs() {
  return (
    <nav className="flex h-[18px] items-stretch border-t-2 border-b-2 border-t-black border-b-[#999] bg-[#f0f0f0]">
      {navGlyphs.map((d, i) => (
        <button key={d} type="button" aria-label={navNames[i]} className="flex w-[17px] items-center justify-center border border-[#a0a0a0] border-l-white">
          <svg width="11" height="11" fill="#707070" stroke="#707070"><path d={d} /></svg>
        </button>
      ))}
      <svg width="9" height="14"><path d="M1 0l7 14" stroke="#000" /></svg>
      {sheets.map((s, i) => (
        <div key={s} className="flex">
          <button type="button" className={i === 3 ? "bg-white px-[5px] text-[12px] leading-[14px] font-bold whitespace-pre" : "border-b border-black px-[5px] text-[12px] leading-[13px] whitespace-pre"}>{s}</button>
          <svg width="11" height="14" fill="none" stroke="#000">
            {i < sheets.length - 1 && <path d="M1 0l7 14" />}
            <path d="M10 0l-8 14" />
          </svg>
        </div>
      ))}
    </nav>
  );
}

const accountCells = ["Acct:", "Open Psns:", "DT BP:", "Purch Pwr:", "Closed P/L:", "RT TE:", "Open P/L:"];

function StatusBar() {
  return (
    <footer className="flex h-[21px] items-center border-b border-[#56607c] bg-[#f0eeee] pt-px font-['Open_Sans',sans-serif] text-[14px] leading-[18px]">
      <span className="mr-auto pl-[2px]">For Help, press F1</span>
      {accountCells.map((c) => <span key={c} className="border-r border-[#d4d4d4] pr-[14px] pl-[5px]">{c}</span>)}
      <a href="#order-bar" className="border-r border-[#d4d4d4] px-[4px] text-[#148a14]">ORDER BAR</a>
      <a href="#macros" className="border-r border-[#d4d4d4] px-[4px] text-[#148a14]">MACROS</a>
      <span className="border-r border-[#d4d4d4] px-1"><svg width="12" height="12"><circle cx="6" cy="6" r="5" fill="#c00000" stroke="#300" /><circle cx="4" cy="4" r="2" fill="#ffb0b0" /></svg></span>
      <span className="px-1">02/07/2024 14:01</span>
    </footer>
  );
}

export default function App() {
  return (
    <div className="flex min-h-screen flex-col bg-[#f0f0f0] font-['Liberation_Sans',sans-serif] text-black">
      <TitleBar />
      <MenuBar />
      <Toolbar />
      <main className="relative flex border-x-2 border-[#808080] border-r-[#c8c8c8] bg-black">
        <div className="min-w-0 flex-1">
          <div className="flex h-5 items-center pt-1 pl-px text-[16px] whitespace-pre">
            <span className="text-[#6464ff]">GS:STOXX50-DT - 60 min</span>
            <span className="ml-[18px] text-white">07/02/2024</span>
            <span className="ml-[11px] text-[#00ff00]">L=4911</span>
            <span className="mr-[11px] ml-[11px] text-[#00ff00]">C=4911</span>
            <StudyRow
              className=""
              studies={[
                { name: "Close", values: [["4911", "text-[#00ffff]"]] },
                { name: "HILOW Alert", values: [["4971", "text-[#ff0000]"]] },
                { name: "DONCHIAN CHANNEL", values: [["5015", "text-[#008080]"], ["4911", "text-[#008080]"]] },
                { name: "Strategy ", values: [] },
                { name: "Posizioni", values: [["4995", "text-[#808080]"], ["4932", "text-[#808080]"]] },
              ]}
            />
          </div>
          <PricePane />
          <StudyRow
            className="h-[22px] pt-[6px]"
            studies={[
              { name: "Macd Ciclico    ", values: [["0.00", "text-[#808080]"]] },
              { name: "Leo Chart", values: [["-3.11", "text-[#00ffff]"], ["8.00", "text-[#ff0000]"], ["-8.00", "text-[#ff0000]"], ["4.00", "text-[#6b6b00]"], ["-4.00", "text-[#6b6b00]"], ["0.00", "text-[#0000ff]"]] },
            ]}
          />
          <MacdPane />
          <StudyRow
            className="h-[21px] pt-1"
            studies={[
              { name: "CCI Smothing ekam", values: [["-31.43", "text-[#a0a0a0]"], ["120.00", "text-[#808080]"], ["-120.00", "text-[#808080]"], ["-31.43", "text-[#404040]"]] },
              { name: "Stoc colore    ", values: [["-0.51", "text-[#c86400]"]] },
            ]}
          />
          <CciPane />
          <TimeAxis />
        </div>
        <ValueAxis />
        <MdiButtons className="absolute top-2 -right-3 w-[72px]" />
      </main>
      <div className="flex h-[23px] items-center bg-[#ececec] pr-[10px] pl-2">
        <button type="button" aria-label="Scroll left" className="mr-auto"><svg width="6" height="9"><path d="M6 0v9l-6-4.500z" fill="#404040" /></svg></button>
        <button type="button" aria-label="Scroll thumb" className="mr-2 flex h-5 w-[18px] items-center justify-center rounded-xs border border-[#909090] bg-gradient-to-b from-[#fafafa] to-[#d8d8d8]"><svg width="10" height="9" stroke="#555"><path d="M1.500 0v9M5.500 0v9M9.500 0v9" /></svg></button>
        <button type="button" aria-label="Scroll right"><svg width="6" height="9"><path d="M0 0v9l6-4.500z" fill="#404040" /></svg></button>
      </div>
      <SheetTabs />
      <StatusBar />
    </div>
  );
}
